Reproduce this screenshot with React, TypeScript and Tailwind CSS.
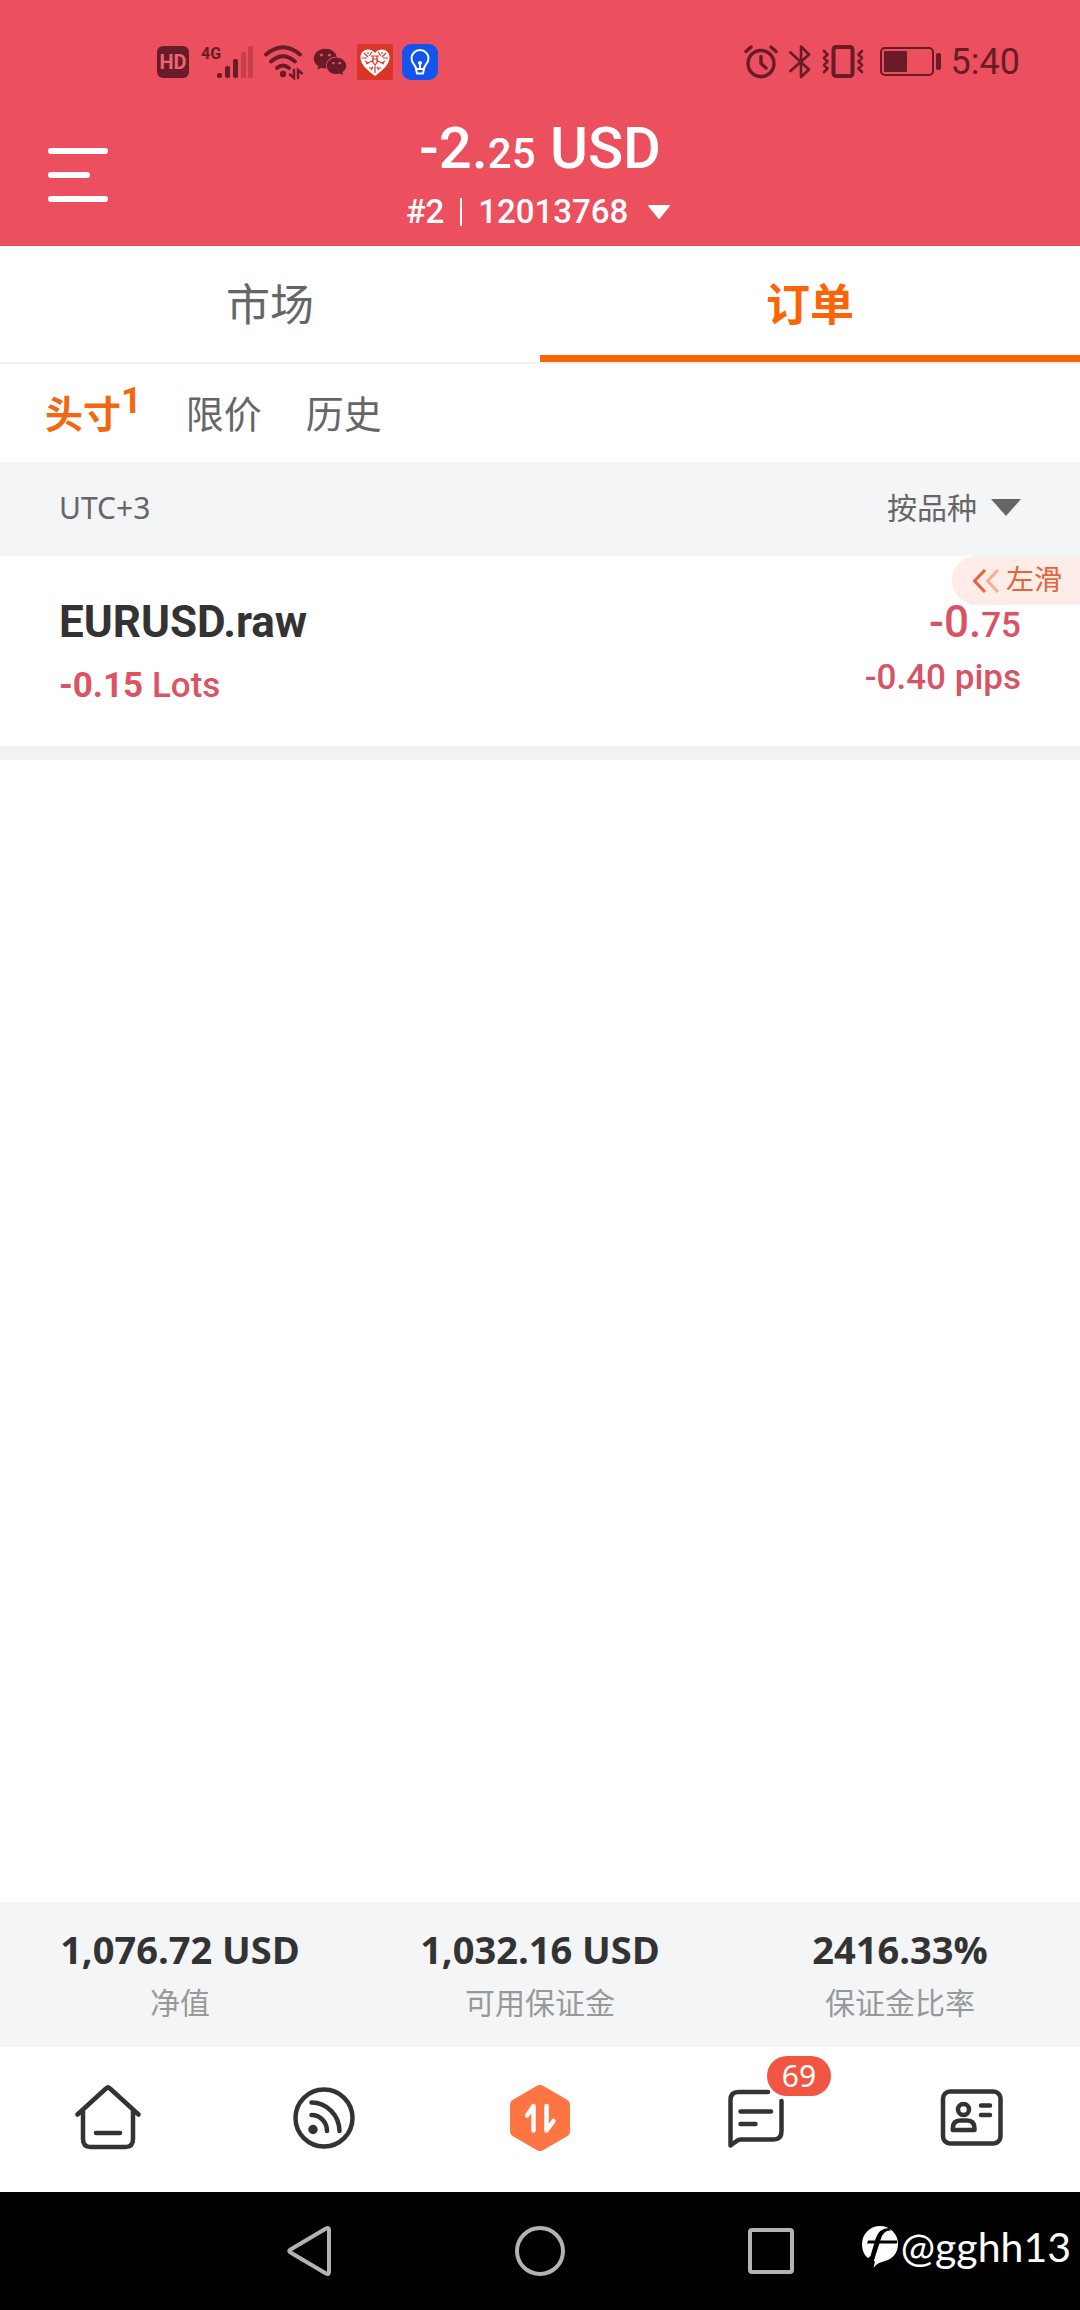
import React, { useState } from "react";
import { FaWeixin } from "react-icons/fa";

const stats = [
  { value: "1,076.72 USD", label: "净值" },
  { value: "1,032.16 USD", label: "可用保证金" },
  { value: "2416.33%", label: "保证金比率" },
];

const mainTabs = ["市场", "订单"];

const orderTabs = [
  { title: "头寸", count: 1 },
  { title: "限价" },
  { title: "历史" },
];

const StatusBar: React.FC = () => (
  <div className="flex h-9 items-center justify-between pr-[60px] pl-[157px] text-[#6a1b28]">
    <div className="flex items-center">
      <span className="flex h-8 w-8 items-center justify-center rounded-md bg-[#6a1b28] text-[20px] font-bold text-[#ea6672]">
        HD
      </span>
      <span className="ml-3 self-start text-[16px] leading-5 font-bold">4G</span>
      <svg className="-ml-1 h-9 w-9" viewBox="0 0 36 36" fill="currentColor">
        <rect x="0" y="29" width="5" height="5" rx="2" />
        <rect x="8" y="22" width="5" height="12" rx="2" />
        <rect x="16" y="15" width="5" height="19" rx="2" />
        <rect x="24" y="8" width="5" height="26" rx="2" opacity="0.3" />
        <rect x="31" y="2" width="5" height="32" rx="2" opacity="0.3" />
      </svg>
      <svg className="ml-[10px] h-9 w-10" viewBox="0 0 40 36" fill="none" stroke="currentColor" strokeWidth="3.8" strokeLinecap="round">
        <path d="M3 10.500Q20-4 37 10.500M8 17.500Q20 7 32 17.500M14 24Q20 19 26 24" />
        <circle cx="20" cy="30" r="3.200" fill="currentColor" stroke="none" />
        <path d="M31 26v8l-4-3.500M35 34v-8l4 3.500" strokeWidth="2.400" />
      </svg>
      <FaWeixin className="ml-[10px] h-[34px] w-[34px]" />
      <svg className="ml-[10px] h-9 w-9" viewBox="0 0 36 36">
        <rect width="36" height="36" rx="2" fill="#d93529" />
        <path d="M18 32C10 26 3.500 20.500 3.500 13.500C3.500 8.500 7 5.500 11 5.500C14 5.500 16.500 7 18 9C19.500 7 22 5.500 25 5.500C29 5.500 32.500 8.500 32.500 13.500C32.500 20.500 26 26 18 32Z" fill="#fff" />
        <path d="M7 9l4 4M15 8l-3 4M21 8l3 4M29 9l-4 4M9 20l6-3 3 4 3-4 6 3M12 24h4M20 24h4M18 22v7M14 12h8M15 15h6M16 12v7M20 12v7M14 26l2-3M22 26l-2-3M5 14h5M26 14h5M8 17l3 2M28 17l-3 2M11 8v2M25 8v2" fill="none" stroke="#d93529" strokeWidth="1.200" />
      </svg>
      <svg className="ml-[9px] h-9 w-9" viewBox="0 0 36 36" fill="none" stroke="#fff" strokeWidth="2" strokeLinejoin="round">
        <rect width="36" height="36" rx="9" fill="#1354ee" stroke="none" />
        <path d="M14 25c0-4-4.500-5.500-4.500-10.500a8.500 8.500 0 0 1 17 0c0 5-4.500 6.500-4.500 10.500zM14 25l1 4.500h6l1-4.500M18 25v-6" />
        <circle cx="18" cy="19" r="2" fill="#fff" stroke="none" />
      </svg>
    </div>
    <div className="flex items-center">
      <svg className="h-9 w-[34px]" viewBox="0 0 34 36" fill="none" stroke="currentColor" strokeWidth="3.400" strokeLinecap="round">
        <circle cx="17" cy="19.500" r="13" />
        <path d="M17 12.500v7l5 4.500M2 7.500l5-4.500M32 7.500l-5-4.500" />
      </svg>
      <svg className="ml-[11px] h-9 w-[22px]" viewBox="0 0 22 36" fill="none" stroke="currentColor" strokeWidth="2.600" strokeLinejoin="round" strokeLinecap="round">
        <path d="M1.500 8.500L20 25.500L12 33V2.500L20 10.500L1.500 27" />
      </svg>
      <svg className="ml-[11px] h-9 w-[42px]" viewBox="0 0 42 36" fill="none" stroke="currentColor" strokeWidth="3" strokeLinecap="round" strokeLinejoin="round">
        <rect x="11.500" y="3" width="19" height="29" rx="2.500" strokeWidth="4" />
        <path d="M2 7l3.500 3.500L2 14l3.500 3.500L2 21l3.500 3.500L2 28M40 7l-3.500 3.500L40 14l-3.500 3.500L40 21l-3.500 3.500L40 28" strokeWidth="2.600" />
      </svg>
      <svg className="ml-4 h-9 w-[61px]" viewBox="0 0 61 36" fill="currentColor">
        <rect x="1" y="4" width="52" height="27" rx="4" fill="none" stroke="currentColor" strokeWidth="2" />
        <rect x="4" y="7" width="23" height="21" rx="1" />
        <rect x="56" y="9" width="5" height="17" rx="2" />
      </svg>
      <span className="ml-[10px] text-[36px] leading-9">5:40</span>
    </div>
  </div>
);

const HomeIcon = () => (
  <svg className="h-[66px] w-[66px]" viewBox="0 0 66 66" fill="none" stroke="#333" strokeWidth="4.500" strokeLinecap="round">
    <path d="M2.500 29.500L31 3.500Q33 1.500 35 3.500L63.500 29.500M8 25V54Q8 62 15.500 62H50.500Q58 62 58 54V25M21 48H45" />
  </svg>
);

const FeedIcon = () => (
  <svg className="h-16 w-16" viewBox="0 0 64 64" fill="none" stroke="#333" strokeWidth="4.500" strokeLinecap="round">
    <circle cx="32" cy="32" r="28.500" />
    <circle cx="21" cy="43.500" r="4.700" fill="#333" stroke="none" />
    <path d="M19.500 29A15.500 16 0 0 1 35 45M19.500 16.500A28 29 0 0 1 47.500 45" />
  </svg>
);

const TradeIcon = () => (
  <svg className="h-[66px] w-[60px]" viewBox="0 0 60 66" strokeLinejoin="round" strokeLinecap="round">
    <path d="M30 6L54 20V46L30 60L6 46V20Z" fill="#ff7443" stroke="#ff7443" strokeWidth="12" />
    <path d="M17 30.500L23.500 21V45.500M36.500 21V45.500L43.500 36" fill="none" stroke="#fff" strokeWidth="4.500" />
  </svg>
);

const ChatIcon = () => (
  <svg className="h-[60px] w-14" viewBox="0 0 56 60" fill="none" stroke="#333" strokeWidth="4.500" strokeLinecap="round" strokeLinejoin="round">
    <path d="M40 4H10.500Q2.500 4 2.500 12V57.500L9 52.800Q10.500 51.500 13 51.500H45.500Q53.500 51.500 53.500 43.500V13M12.500 23.500H43M12.500 36H27.500" />
  </svg>
);

const ProfileIcon = () => (
  <svg className="h-[60px] w-16" viewBox="0 0 64 60" fill="none" stroke="#333" strokeWidth="4.500" strokeLinecap="round" strokeLinejoin="round">
    <rect x="3" y="3.500" width="57.500" height="52" rx="7" />
    <circle cx="23.500" cy="21.500" r="5.500" />
    <path d="M12.800 42V40.500Q12.800 32.500 20.500 32.500H27Q34.500 32.500 34.500 40.500V42ZM41 17.500H50M41 27H50" />
  </svg>
);

const navItems = [
  { name: "首页", icon: HomeIcon },
  { name: "动态", icon: FeedIcon },
  { name: "交易", icon: TradeIcon },
  { name: "消息", icon: ChatIcon, badge: 69 },
  { name: "我的", icon: ProfileIcon },
];

const App: React.FC = () => {
  const [mainTab, setMainTab] = useState("订单");
  const [orderTab, setOrderTab] = useState("头寸");

  return (
    <div className="flex min-h-screen flex-col bg-white font-[Roboto,'Noto_Sans_CJK_SC',sans-serif] text-[#333]">
      <header className="bg-[#ec4f5e] pt-11 text-white">
        <StatusBar />
        <div className="grid grid-cols-[1fr_auto_1fr] items-center px-12 pt-[38px] pb-[14px]">
          <button aria-label="菜单" className="flex flex-col items-start gap-[18px]">
            <span className="h-[6px] w-[60px] rounded-full bg-white" />
            <span className="h-[6px] w-[42px] rounded-full bg-white" />
            <span className="h-[6px] w-[60px] rounded-full bg-white" />
          </button>
          <div className="flex flex-col items-center gap-[14px] font-medium">
            <h1 className="text-[58px] leading-[60px]">
              -2.<span className="text-[42px] leading-none">25</span> USD
            </h1>
            <button className="flex items-center pr-1 text-[33px] leading-10">
              <span>#2</span>
              <span className="mx-4 h-7 w-[2px] bg-white" />
              <span>12013768</span>
              <svg className="ml-5 h-[14px] w-[22px]" viewBox="0 0 22 14" fill="#fff">
                <path d="M1 0H21Q22.500 0 21.500 1.500L12 13.200Q11 14.200 10 13.200L.5 1.500Q-.5 0 1 0Z" />
              </svg>
            </button>
          </div>
        </div>
      </header>

      <nav className="grid grid-cols-2 border-b-2 border-[#f3f3f3]">
        {mainTabs.map((tab) => (
          <button
            key={tab}
            onClick={() => setMainTab(tab)}
            className={
              mainTab === tab
                ? "h-[116px] border-b-[7px] border-[#fc6408] pt-[11px] text-[44px] font-bold text-[#fc6408]"
                : "h-[116px] pt-1 text-[44px] text-[#666]"
            }
          >
            {tab}
          </button>
        ))}
      </nav>

      <nav className="flex h-[98px] items-center gap-11 px-[45px] pt-1 text-[38px]">
        {orderTabs.map((tab) => (
          <button
            key={tab.title}
            onClick={() => setOrderTab(tab.title)}
            className={
              orderTab === tab.title
                ? "flex items-center font-bold text-[#f4670f]"
                : "flex items-center text-[#666]"
            }
          >
            {tab.title}
            {tab.count && <span className="pb-7 text-[36px] leading-9">{tab.count}</span>}
          </button>
        ))}
      </nav>

      <div className="flex h-[94px] items-center justify-between bg-[#f4f5f7] px-[59px] pb-1 font-['Noto_Sans','Noto_Sans_CJK_SC',sans-serif] text-[30px] text-[#666]">
        <span>UTC+3</span>
        <label className="flex items-center gap-[14px]">
          <select aria-label="排序" className="appearance-none">
            <option>按品种</option>
          </select>
          <svg className="h-[17px] w-[30px]" viewBox="0 0 30 17" fill="#666">
            <path d="M0 0H30L15 17Z" />
          </svg>
        </label>
      </div>

      <main className="flex-1">
        <article className="relative flex justify-between border-b-[14px] border-[#f2f2f2] px-[59px] pt-10 pb-[38px]">
          <div className="flex flex-col gap-4">
            <h2 className="text-[44px] leading-[52px] font-bold">EURUSD.raw</h2>
            <p className="text-[35px] leading-[44px] font-medium text-[#dc5464]">
              <span className="font-bold">-0.15</span> Lots
            </p>
          </div>
          <div className="flex flex-col gap-2 text-right font-medium text-[#d85464]">
            <p className="text-[44px] leading-[52px]">
              -0.<span className="text-[35px] leading-none">75</span>
            </p>
            <p className="text-[35px] leading-[44px]">-0.40 pips</p>
          </div>
          <div className="absolute top-0 right-0 flex h-[49px] items-center gap-[6px] rounded-l-full bg-[#fdece7] pr-[18px] pl-5 text-[28px] leading-[40px] text-[#e3633a]">
            <svg className="h-6 w-7" viewBox="0 0 28 24" fill="none" strokeWidth="3">
              <path d="M13 1L2.500 12L13 23" stroke="#e8633a" />
              <path d="M26 1L15.500 12L26 23" stroke="#f6b09a" />
            </svg>
            左滑
          </div>
        </article>
      </main>

      <section className="grid grid-cols-3 bg-[#f4f5f7] pt-[25px] pb-6 text-center font-['Open_Sans','Noto_Sans_CJK_SC',sans-serif]">
        {stats.map((stat) => (
          <div key={stat.label} className="flex flex-col gap-3">
            <p className="text-[38px] leading-[44px] font-bold">{stat.value}</p>
            <p className="text-[30px] leading-10 text-[#999]">{stat.label}</p>
          </div>
        ))}
      </section>

      <nav className="grid h-[145px] grid-cols-5 pb-1">
        {navItems.map((item) => (
          <a key={item.name} href="#" aria-label={item.name} className="flex items-center justify-center">
            <span className="relative">
              <item.icon />
              {item.badge && (
                <span className="absolute -top-8 left-[39px] flex h-10 w-16 items-center justify-center rounded-full bg-[#f05643] font-['Noto_Sans',sans-serif] text-[30px] text-white">
                  {item.badge}
                </span>
              )}
            </span>
          </a>
        ))}
      </nav>

      <footer className="relative grid h-[118px] grid-cols-3 items-center bg-black px-[193px]">
        <button aria-label="返回" className="flex justify-center">
          <svg className="h-[52px] w-[46px]" viewBox="0 0 46 52" fill="none" stroke="#b3b3b3" strokeWidth="4" strokeLinejoin="round">
            <path d="M4.500 24.500L40 3.500Q43 2 43 5V47Q43 50 40 48.500L4.500 27.500Q2 26 4.500 24.500Z" />
          </svg>
        </button>
        <button aria-label="主屏幕" className="flex justify-center">
          <span className="h-[50px] w-[50px] rounded-full border-4 border-[#b3b3b3]" />
        </button>
        <button aria-label="最近任务" className="flex justify-center">
          <span className="h-[46px] w-[46px] rounded-[4px] border-4 border-[#b3b3b3]" />
        </button>
        <div className="absolute right-[9px] bottom-[38px] flex items-center gap-[3px] font-[Lato,sans-serif] text-[41px] leading-[50px] text-white">
          <svg className="h-[42px] w-9" viewBox="0 0 36 42">
            <path d="M18 0A18 18 0 0 1 36 18Q36 32 20 36Q15 37 11.500 42L13 35.500Q0 32 0 18A18 18 0 0 1 18 0Z" fill="#fff" />
            <path d="M29 4.500Q21 4 18.500 14L13 31L11 38L5 33L8.500 30L13.500 13Q17 2 27 2Z" fill="#000" />
            <path d="M6 14.500H35V17.500H5Z" fill="#000" />
          </svg>
          <span>@gghh13</span>
        </div>
      </footer>
    </div>
  );
};

export default App;
